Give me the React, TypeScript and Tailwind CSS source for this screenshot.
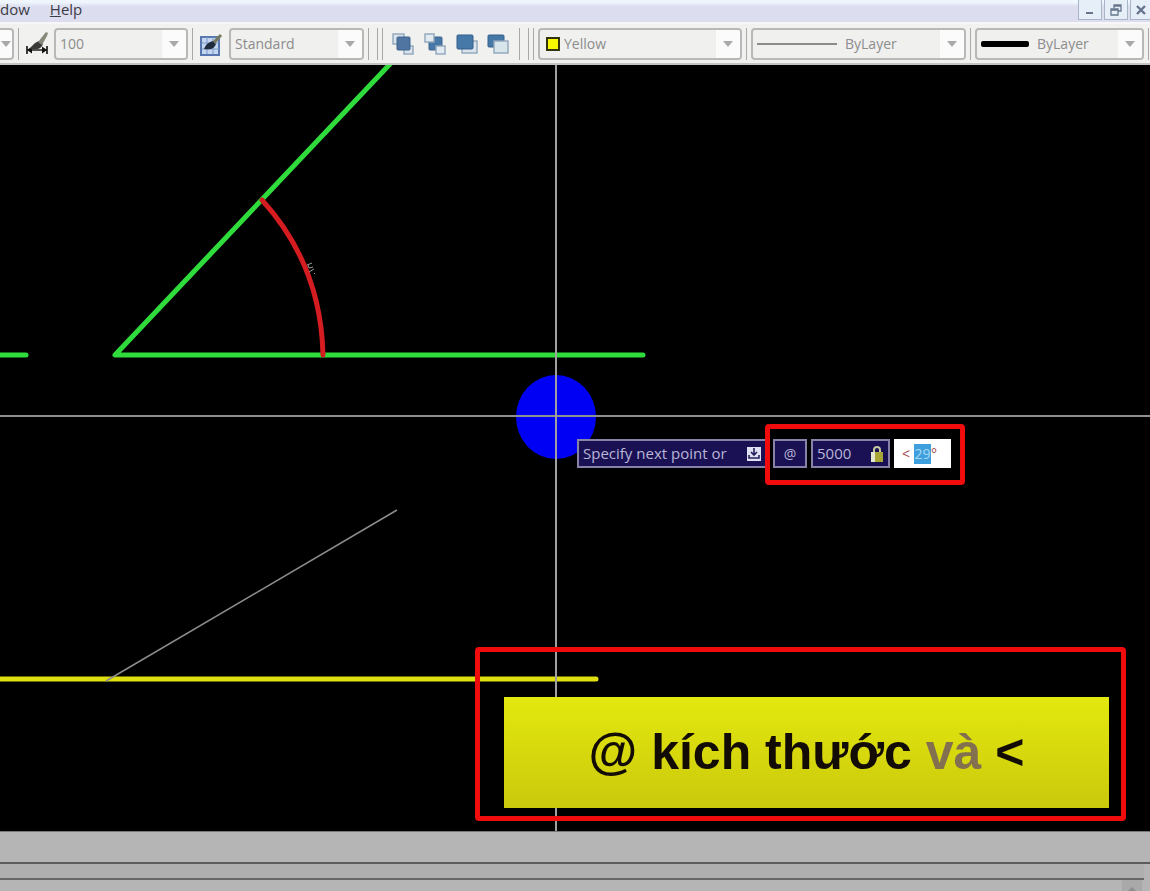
import type { ReactNode } from 'react';

const Arrow = () => (
  <svg className="pointer-events-none h-2 w-3" viewBox="0 0 12 8" aria-hidden="true">
    <path d="M1 1h10L6 7z" fill="#a9a9a9" />
  </svg>
);

type ComboProps = {
  label: string;
  value: string;
  width: string;
  swatch?: ReactNode;
};

const Combo = ({ label, value, width, swatch }: ComboProps) => (
  <label
    className={`flex h-8 shrink-0 items-center overflow-hidden rounded-sm border-2 border-[#b8b8b8] bg-[#f0f0ef] ${width}`}
  >
    {swatch}
    <select
      aria-label={label}
      className="h-full min-w-0 flex-1 appearance-none bg-transparent px-1 text-sm text-[#8c8c8c] outline-none"
    >
      <option>{value}</option>
    </select>
    <span className="flex h-full w-6 items-center justify-center bg-[#fbfbfb]">
      <Arrow />
    </span>
  </label>
);

const Divider = () => <span className="h-8 w-px shrink-0 bg-[#a8a8a8]" />;

const Grip = () => (
  <span className="flex shrink-0 gap-1">
    <Divider />
    <Divider />
  </span>
);

const ToolButton = ({ label, children }: { label: string; children: ReactNode }) => (
  <button type="button" aria-label={label} className="flex h-6 w-6 shrink-0 items-center justify-center">
    <svg width="24" height="24" viewBox="0 0 24 24" fill="none">
      {children}
    </svg>
  </button>
);

const WindowButton = ({ label, children }: { label: string; children: ReactNode }) => (
  <button
    type="button"
    aria-label={label}
    className="flex h-5 w-6 items-center justify-center border border-t-0 border-[#a9b4c6] bg-[#e6eef8]"
  >
    <svg width="14" height="14" viewBox="0 0 14 14" fill="none" stroke="#66758c">
      {children}
    </svg>
  </button>
);

const MenuBar = () => (
  <header className="flex h-6 items-start justify-between overflow-hidden border-b-2 border-[#f7f7f9] bg-linear-to-b from-[#eff6fd] from-10% to-[#dcdef0] to-30% text-[#3c3c46]">
    <nav className="flex gap-5 text-[15px] leading-[18px]">
      <button type="button">dow</button>
      <button type="button">
        <u>H</u>elp
      </button>
    </nav>
    <div className="-mr-1 flex gap-0.5">
      <WindowButton label="Minimize">
        <path d="M3 10h7" strokeWidth="2" />
      </WindowButton>
      <WindowButton label="Restore">
        <path d="M5 5V2h7v6H9M5 3h7M2 6h7v6H2zM2 7h7" strokeWidth="1.3" />
      </WindowButton>
      <WindowButton label="Close">
        <path d="M2 3l8 8M10 3l-8 8" strokeWidth="2.4" />
      </WindowButton>
    </div>
  </header>
);

const Toolbar = () => (
  <div className="flex h-[41px] items-center overflow-hidden border-b-2 border-[#c4c4c2] bg-[#f1f1f0]">
    <button
      type="button"
      aria-label="Text style"
      className="flex h-8 w-[14px] shrink-0 items-center justify-center overflow-hidden rounded-r-sm border-2 border-l-0 border-[#b8b8b8] bg-[#fbfbfb]"
    >
      <Arrow />
    </button>
    <div className="flex items-center gap-1.5 pl-1">
      <Divider />
      <ToolButton label="Dimension style">
        <path d="M2 14v8M22 14v8" stroke="#111" strokeWidth="1.6" />
        <path d="M2 18h20" stroke="#222" strokeWidth="1.5" />
        <path d="M2 18l5-3.5v7zM22 18l-5-3.5v7z" fill="#111" />
        <path d="M5 17c3-5 6-7 9-8l4 3c-2 5-6 6-13 5z" fill="#3a3a38" />
        <path d="M13 10L21 0l2 1-1 3-5 9z" fill="#85897a" />
      </ToolButton>
    </div>
    <div className="flex items-center gap-1 pl-[5px]">
      <Combo label="Dimension scale" value="100" width="w-[134px]" />
      <Divider />
    </div>
    <div className="flex items-center px-1.5">
      <ToolButton label="Table style">
        <rect x="2" y="5" width="18" height="18" fill="#c3d5ef" stroke="#5877b0" strokeWidth="2" />
        <path d="M3 11h17M3 17h17M8 5v17M14 5v17" stroke="#7f9bcb" />
        <path d="M5 17c2-5 5-7 9-8l3 3c-2 5-6 6-12 5z" fill="#1f2c3d" />
        <path d="M14 9l7-7 2 2-7 8z" fill="#777b5e" />
      </ToolButton>
    </div>
    <Combo label="Table style name" value="Standard" width="w-[135px]" />
    <div className="flex items-center gap-2 pl-1">
      <Divider />
      <Grip />
    </div>
    <div className="flex items-center gap-2 px-2">
      <ToolButton label="Bring to front">
        <rect x="2" y="2" width="11" height="10" fill="#dce5ed" stroke="#91a6ba" strokeWidth="1.4" />
        <rect x="13" y="14" width="9" height="8" fill="#dce5ed" stroke="#91a6ba" strokeWidth="1.4" />
        <rect x="6" y="5" width="13" height="13" rx="1" fill="#4f75a0" stroke="#3d648f" />
      </ToolButton>
      <ToolButton label="Send to back">
        <rect x="6" y="5" width="13" height="13" rx="1" fill="#4878a8" stroke="#3d648f" />
        <rect x="2" y="2" width="9" height="8" fill="#e3ebf2" stroke="#91a6ba" strokeWidth="1.4" />
        <rect x="13" y="14" width="9" height="8" fill="#e3ebf2" stroke="#91a6ba" strokeWidth="1.4" />
      </ToolButton>
      <ToolButton label="Bring above objects">
        <rect x="7" y="9" width="15" height="12" fill="#dce5ed" stroke="#91a6ba" strokeWidth="1.4" />
        <rect x="2" y="3" width="16" height="14" rx="1" fill="#4679a8" stroke="#335f8c" />
      </ToolButton>
      <ToolButton label="Send under objects">
        <rect x="1" y="3" width="16" height="12" rx="1" fill="#4679a8" stroke="#335f8c" />
        <rect x="7" y="9" width="14" height="12" fill="#d8e6ec" stroke="#91a6ba" strokeWidth="1.4" />
      </ToolButton>
    </div>
    <div className="flex items-center gap-2 pr-1">
      <Divider />
      <Grip />
    </div>
    <div className="flex items-center gap-1">
      <Combo
        label="Color"
        value="Yellow"
        width="w-[204px]"
        swatch={<span className="ml-1.5 h-[14px] w-[14px] shrink-0 border-2 border-[#33330a] bg-[#f8f800]" />}
      />
      <Divider />
      <Combo
        label="Linetype"
        value="ByLayer"
        width="w-[215px]"
        swatch={<span className="mx-1 h-0.5 w-20 shrink-0 bg-[#8b8b8b]" />}
      />
      <Divider />
      <Combo
        label="Lineweight"
        value="ByLayer"
        width="w-[169px]"
        swatch={<span className="mx-1 h-1.5 w-12 shrink-0 rounded-xs bg-black" />}
      />
      <Divider />
    </div>
  </div>
);

const Drawing = () => (
  <svg className="absolute inset-0 h-full w-full" fill="none" aria-hidden="true">
    <ellipse cx="556" cy="352" rx="40" ry="42" fill="#0000f5" />
    <g stroke="#2fdc3c" strokeWidth="5" strokeLinecap="round" strokeLinejoin="round">
      <path d="M-5 290H26" />
      <path d="M391 -2L115 290H643" />
    </g>
    <path d="M262 135Q321 200 323 290" stroke="#d51c20" strokeWidth="5" strokeLinecap="round" />
    {/* angle value, too small to read at this zoom */}
    <path d="M307 200l5-2M308 200l1 3 4-1M309 207l5-3M314 208l1 1" stroke="#9a9a9a" />
    <path d="M0 614H596" stroke="#e0e010" strokeWidth="5" strokeLinecap="round" />
    <path d="M106 616L397 445" stroke="#8c8c8c" strokeWidth="1.5" />
    {/* crosshair */}
    <line x1="0" y1="351" x2="100%" y2="351" stroke="#8f8f8f" strokeWidth="2" />
    <line x1="556" y1="0" x2="556" y2="100%" stroke="#a0a0a0" strokeWidth="2" />
  </svg>
);

const DynamicInput = () => (
  <div className="absolute top-[374px] left-[577px] flex h-[29px] gap-1 text-[15px] text-[#b9b5d6]">
    <div className="mr-0.5 flex w-[190px] items-center justify-between border-2 border-[#8783a8] bg-[#1a1155] px-1">
      <span className="whitespace-nowrap">Specify next point or</span>
      <svg width="14" height="14" viewBox="0 0 14 14" aria-hidden="true">
        <path d="M0 0h14v14H0z" fill="#dfe1f2" />
        <path d="M7 1v7M4 5l3 3 3-3M2 8v3h10V8" stroke="#25205c" strokeWidth="1.6" fill="none" />
      </svg>
    </div>
    <span className="flex w-[34px] items-center justify-center border-2 border-[#8783a8] bg-[#1a1155] text-sm">@</span>
    <label className="flex w-[79px] items-center border-2 border-[#8783a8] bg-[#1a1155] px-1">
      <input aria-label="Distance" defaultValue="5000" className="w-full min-w-0 bg-transparent outline-none" />
      <svg className="shrink-0" width="14" height="18" viewBox="0 0 14 18" aria-hidden="true">
        <path d="M4 8V5a3 3 0 0 1 6 0v3" stroke="#c9c9a0" strokeWidth="2" fill="none" />
        <path d="M1 7h12v10H1z" fill="#a9a638" />
        <path d="M1 7h4v10H1z" fill="#e6e6cf" />
      </svg>
    </label>
    <label className="flex w-[57px] items-center bg-white pl-2 text-sm text-[#a04848]">
      <span className="pr-1">&lt;</span>
      <input
        aria-label="Angle"
        defaultValue="29"
        className="h-5 w-[17px] bg-[#3f9fdc] text-center text-[#a5d8f5] outline-none"
      />
      <span>°</span>
    </label>
  </div>
);

const Canvas = () => (
  <main className="relative min-h-[766px] flex-1 overflow-hidden bg-black">
    <Drawing />
    <DynamicInput />
    <div className="absolute top-[359px] left-[765px] h-[61px] w-[200px] rounded-sm border-5 border-[#f00c0c]" />
    <div className="absolute top-[582px] left-[475px] h-[174px] w-[651px] rounded-sm border-5 border-[#f00c0c] px-3 pt-[45px] pb-2 pl-6">
      <p className="flex h-full items-center justify-center bg-linear-to-b from-[#e3e80e] to-[#cbc90c] font-['Liberation_Sans',sans-serif] text-[50px] font-bold text-[#120c05]">
        <span className="whitespace-nowrap">
          @ kích thước <span className="text-[#82704f]">và</span> &lt;
        </span>
      </p>
    </div>
  </main>
);

const CommandLine = () => (
  <footer className="border-t border-[#777] bg-[#b5b5b5]">
    <div className="h-8 border-b-2 border-[#5c5c5c]" />
    <div className="mr-1.5 h-4 border-b-2 border-[#666] bg-[#afafaf]" />
    <div className="flex h-[11px] justify-end pr-2">
      <button type="button" aria-label="Scroll up" className="flex w-5 items-end justify-center bg-[#a9a9a9]">
        <svg width="8" height="4" viewBox="0 0 8 4" aria-hidden="true">
          <path d="M4 0l4 4H0z" fill="#8d8d8d" />
        </svg>
      </button>
    </div>
  </footer>
);

export default function App() {
  return (
    <div className="flex min-h-screen flex-col font-['Open_Sans','Noto_Sans',sans-serif]">
      <MenuBar />
      <Toolbar />
      <Canvas />
      <CommandLine />
    </div>
  );
}
